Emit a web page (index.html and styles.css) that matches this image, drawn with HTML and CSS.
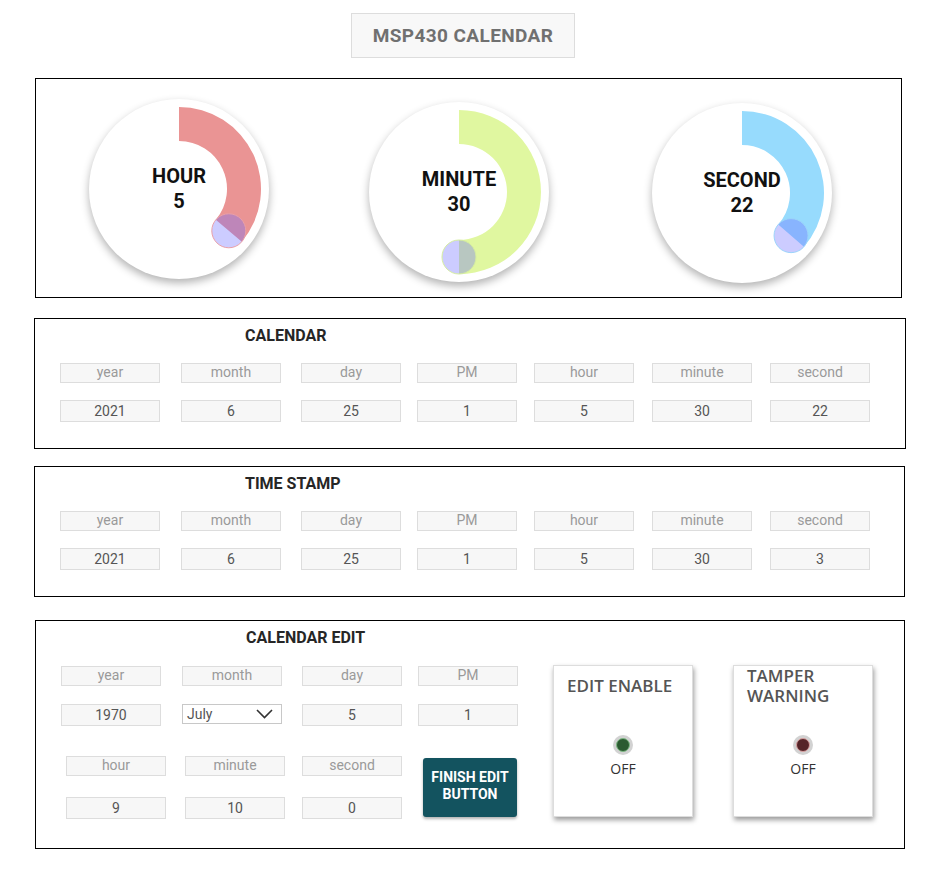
FILE: index.html
```html
<!DOCTYPE html>
<html lang="en">

<head>
  <meta charset="UTF-8" />
  <meta name="viewport" content="width=device-width, initial-scale=1.0" />
  <title>MSP430 Calendar</title>
  <link rel="stylesheet" href="styles.css">
</head>

<body>
  <header class="topbar">
    <div class="app-title">MSP430 CALENDAR</div>
  </header>

  <!-- live gauges -->
  <section class="panel panel-gauges">
    <div class="gauge gauge-hour">
      <svg class="gauge-arc" viewBox="0 0 180 180">
        <path class="arc" d="M90 8 A82 82 0 0 1 152.82 142.71 L126.77 120.85 A48 48 0 0 0 90 42 Z" />
        <circle class="knob" cx="139.79" cy="131.78" r="17" />
      </svg>
      <div class="gauge-text">HOUR<br>5</div>
    </div>
    <div class="gauge gauge-minute">
      <svg class="gauge-arc" viewBox="0 0 180 180">
        <path class="arc" d="M90 8 A82 82 0 0 1 90 172 L90 138 A48 48 0 0 0 90 42 Z" />
        <circle class="knob" cx="90" cy="155" r="17" />
      </svg>
      <div class="gauge-text">MINUTE<br>30</div>
    </div>
    <div class="gauge gauge-second">
      <svg class="gauge-arc" viewBox="0 0 180 180">
        <path class="arc" d="M90 8 A82 82 0 0 1 151.89 143.80 L126.23 121.49 A48 48 0 0 0 90 42 Z" />
        <circle class="knob" cx="139.06" cy="132.64" r="17" />
      </svg>
      <div class="gauge-text">SECOND<br>22</div>
    </div>
  </section>

  <section class="panel panel-calendar">
    <h2 class="panel-title">CALENDAR</h2>
    <div class="fields">
      <div class="field-label">year</div>
      <div class="field-label">month</div>
      <div class="field-label">day</div>
      <div class="field-label">PM</div>
      <div class="field-label">hour</div>
      <div class="field-label">minute</div>
      <div class="field-label">second</div>
      <div class="field-value">2021</div>
      <div class="field-value">6</div>
      <div class="field-value">25</div>
      <div class="field-value">1</div>
      <div class="field-value">5</div>
      <div class="field-value">30</div>
      <div class="field-value">22</div>
    </div>
  </section>

  <section class="panel panel-stamp">
    <h2 class="panel-title">TIME STAMP</h2>
    <div class="fields">
      <div class="field-label">year</div>
      <div class="field-label">month</div>
      <div class="field-label">day</div>
      <div class="field-label">PM</div>
      <div class="field-label">hour</div>
      <div class="field-label">minute</div>
      <div class="field-label">second</div>
      <div class="field-value">2021</div>
      <div class="field-value">6</div>
      <div class="field-value">25</div>
      <div class="field-value">1</div>
      <div class="field-value">5</div>
      <div class="field-value">30</div>
      <div class="field-value">3</div>
    </div>
  </section>

  <section class="panel panel-edit">
    <h2 class="panel-title">CALENDAR EDIT</h2>
    <div class="edit-body">
      <div class="edit-fields">
        <div class="date-grid">
          <div class="field-label">year</div>
          <div class="field-label">month</div>
          <div class="field-label">day</div>
          <div class="field-label">PM</div>
          <div class="field-value">1970</div>
          <div class="month-select">
            <span>July</span>
            <svg width="17" height="10" viewBox="0 0 17 10"><path d="M1 1 L8.5 8.5 L16 1" fill="none" stroke="#333" stroke-width="1.6" /></svg>
          </div>
          <div class="field-value">5</div>
          <div class="field-value">1</div>
        </div>
        <div class="time-grid">
          <div class="field-label">hour</div>
          <div class="field-label">minute</div>
          <div class="field-label">second</div>
          <button class="finish-btn">FINISH EDIT<br>BUTTON</button>
          <div class="field-value">9</div>
          <div class="field-value">10</div>
          <div class="field-value">0</div>
        </div>
      </div>

      <div class="card">
        <div class="card-title">EDIT ENABLE</div>
        <div class="led led-green"></div>
        <div class="led-state">OFF</div>
      </div>
      <div class="card">
        <div class="card-title">TAMPER WARNING</div>
        <div class="led led-red"></div>
        <div class="led-state">OFF</div>
      </div>
    </div>
  </section>
</body>

</html>
```

FILE: styles.css
```css
body {
  margin: 0;
  padding-top: 13px;
  font-family: Roboto, "Liberation Sans", sans-serif;
  background: #fff;
  color: #333;
}

.topbar {
  padding-left: 351px;
}

.app-title {
  width: 224px;
  height: 45px;
  box-sizing: border-box;
  border: 1px solid #ddd;
  background: #f8f8f8;
  color: #707070;
  font-size: 19px;
  font-weight: 700;
  letter-spacing: 0.4px;
  line-height: 43px;
  text-align: center;
}

.panel {
  box-sizing: border-box;
  border: 1px solid #000;
}

/* ========= Gauges ========= */

.panel-gauges {
  display: flex;
  align-items: flex-start;
  margin: 20px 0 0 35px;
  width: 867px;
  height: 220px;
  padding-left: 53px;
}

.gauge {
  position: relative;
  width: 180px;
  height: 180px;
  border-radius: 50%;
  background: #fff;
  box-shadow: 0 4px 8px rgba(0, 0, 0, 0.3);
  display: flex;
  align-items: center;
  justify-content: center;
}

.gauge-hour {
  margin-top: 20px;
}

.gauge-minute {
  margin: 23px 0 0 100px;
}

.gauge-second {
  margin: 24px 0 0 103px;
}

.gauge-arc {
  position: absolute;
  left: 0;
  top: 0;
  width: 180px;
  height: 180px;
}

.gauge-text {
  position: relative;
  font-size: 20px;
  font-weight: 700;
  line-height: 25px;
  color: #111;
  text-align: center;
}

.knob {
  fill: rgba(110, 110, 255, 0.35);
  stroke-width: 1;
}

.gauge-hour .arc {
  fill: #ea9494;
}

.gauge-hour .knob {
  stroke: #eaa0a8;
}

.gauge-minute .arc {
  fill: #e0f7a0;
}

.gauge-minute .knob {
  stroke: #d6eea0;
}

.gauge-second .arc {
  fill: #97dbfd;
}

.gauge-second .knob {
  stroke: #9cd4fb;
}

/* ========= Text fields ========= */

.panel-title {
  margin: 0 0 0 210px;
  font-size: 16px;
  font-weight: 700;
  line-height: 18px;
  color: #262626;
}

.panel-calendar,
.panel-stamp {
  margin-left: 34px;
  height: 131px;
  padding-top: 8px;
}

.panel-calendar {
  margin-top: 20px;
  width: 872px;
}

.panel-stamp {
  margin-top: 17px;
  width: 871px;
}

.fields {
  display: grid;
  grid-template-columns: 121px 120px 116px 117px 118px 118px 100px;
  row-gap: 17px;
  margin: 18px 0 0 25px;
}

.field-label,
.field-value {
  width: 100px;
  box-sizing: border-box;
  border: 1px solid #ddd;
  background: #f7f7f7;
  font-size: 14px;
  text-align: center;
}

.field-label {
  height: 20px;
  line-height: 17px;
  color: #9a9a9a;
}

.field-value {
  height: 22px;
  line-height: 20px;
  color: #555;
}

/* ========= Calendar edit ========= */

.panel-edit {
  margin: 23px 0 0 35px;
  width: 870px;
  height: 229px;
  padding-top: 8px;
}

.edit-body {
  display: flex;
  align-items: flex-start;
  margin-top: 18px;
}

.edit-fields {
  width: 457px;
  margin: 1px 0 0 25px;
}

.date-grid {
  display: grid;
  grid-template-columns: 121px 120px 116px 100px;
  row-gap: 18px;
}

.time-grid {
  display: grid;
  grid-template-columns: 119px 117px 121px 94px;
  row-gap: 21px;
  margin: 30px 0 0 5px;
}

.month-select {
  width: 100px;
  height: 20px;
  box-sizing: border-box;
  border: 1px solid #c8c8c8;
  background: #fff;
  display: flex;
  align-items: center;
  justify-content: space-between;
  padding: 0 8px 0 4px;
  font-size: 14px;
  color: #555;
}

.finish-btn {
  grid-column: 4;
  grid-row: 1 / 3;
  align-self: center;
  width: 94px;
  height: 59px;
  border: none;
  border-radius: 3px;
  background: #13535f;
  color: #fff;
  font-family: Roboto, "Liberation Sans", sans-serif;
  font-size: 14px;
  font-weight: 700;
  line-height: 17px;
  box-shadow: 0 2px 3px rgba(0, 0, 0, 0.3);
  padding: 0 0 3px;
}

.card {
  width: 140px;
  height: 152px;
  box-sizing: border-box;
  margin-left: 35px;
  border: 1px solid #ddd;
  background: #fff;
  box-shadow: 1px 3px 5px rgba(0, 0, 0, 0.4);
  font-family: "Open Sans", "Liberation Sans", sans-serif;
}

.card + .card {
  margin-left: 40px;
}

.card-title {
  height: 40px;
  display: flex;
  align-items: center;
  padding: 0 13px;
  font-size: 17px;
  font-weight: 600;
  line-height: 20px;
  color: #555;
}

.led {
  width: 12px;
  height: 12px;
  margin: 32px auto 0;
  border-radius: 50%;
  box-shadow: 0 0 0 3px #d2d2d2;
}

.led-green {
  background: #2b5b31;
  border: 1px solid #7db883;
}

.led-red {
  background: #552428;
  border: 1px solid #d8a0a0;
}

.led-state {
  margin-top: 7px;
  font-size: 14px;
  line-height: 19px;
  text-align: center;
  color: #333;
}
```
